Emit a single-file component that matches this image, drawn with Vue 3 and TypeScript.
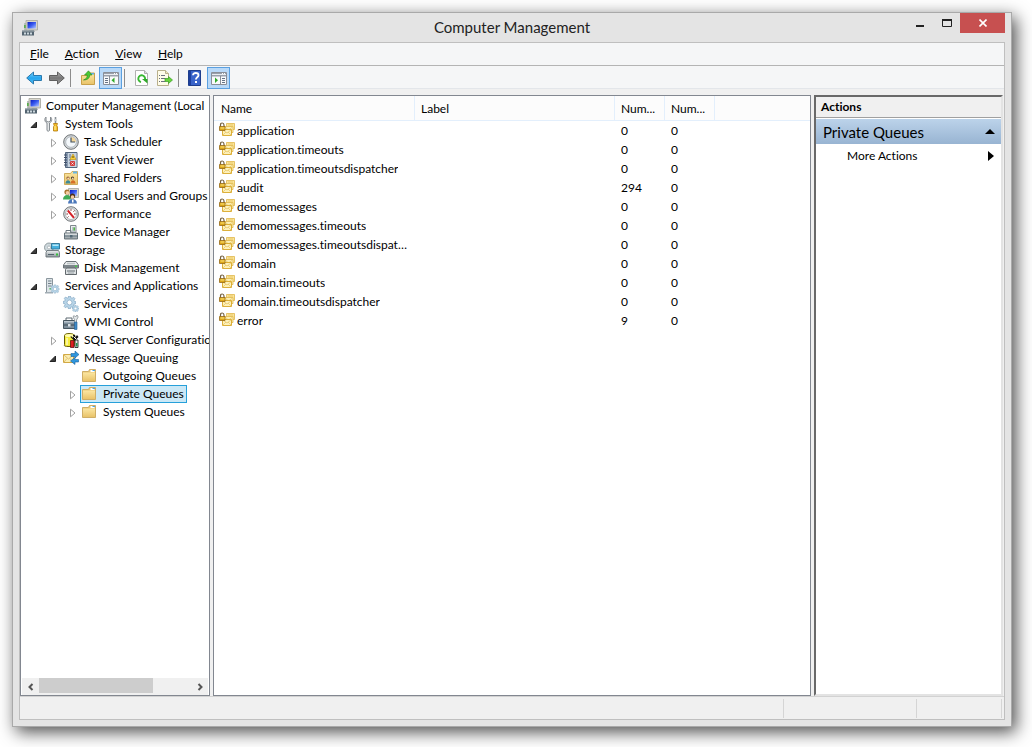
<script setup lang="ts">
import { ref } from 'vue'

interface Node { label: string; icon: string; level: number; state?: 'open' | 'closed' }
interface Queue { name: string; messages: number; journal: number }

const menus = ['File', 'Action', 'View', 'Help']

const tools = [
  [{ icon: 'back', label: 'Back' }, { icon: 'forward', label: 'Forward' }],
  [{ icon: 'up', label: 'Up one level' }, { icon: 'treepane', label: 'Show or hide console tree', on: true }],
  [{ icon: 'refresh', label: 'Refresh' }, { icon: 'export', label: 'Export list' }],
  [{ icon: 'help', label: 'Help' }, { icon: 'actionpane', label: 'Show or hide action pane', on: true }],
]

const nodes: Node[] = [
  { label: 'Computer Management (Local', icon: 'computer', level: 0 },
  { label: 'System Tools', icon: 'tools', level: 1, state: 'open' },
  { label: 'Task Scheduler', icon: 'clock', level: 2, state: 'closed' },
  { label: 'Event Viewer', icon: 'event', level: 2, state: 'closed' },
  { label: 'Shared Folders', icon: 'shared', level: 2, state: 'closed' },
  { label: 'Local Users and Groups', icon: 'users', level: 2, state: 'closed' },
  { label: 'Performance', icon: 'perf', level: 2, state: 'closed' },
  { label: 'Device Manager', icon: 'device', level: 2 },
  { label: 'Storage', icon: 'storage', level: 1, state: 'open' },
  { label: 'Disk Management', icon: 'disk', level: 2 },
  { label: 'Services and Applications', icon: 'server', level: 1, state: 'open' },
  { label: 'Services', icon: 'gears', level: 2 },
  { label: 'WMI Control', icon: 'wmi', level: 2 },
  { label: 'SQL Server Configuration', icon: 'sql', level: 2, state: 'closed' },
  { label: 'Message Queuing', icon: 'msmq', level: 2, state: 'open' },
  { label: 'Outgoing Queues', icon: 'folder', level: 3 },
  { label: 'Private Queues', icon: 'folder', level: 3, state: 'closed' },
  { label: 'System Queues', icon: 'folder', level: 3, state: 'closed' },
]

const queues: Queue[] = [
  { name: 'application', messages: 0, journal: 0 },
  { name: 'application.timeouts', messages: 0, journal: 0 },
  { name: 'application.timeoutsdispatcher', messages: 0, journal: 0 },
  { name: 'audit', messages: 294, journal: 0 },
  { name: 'demomessages', messages: 0, journal: 0 },
  { name: 'demomessages.timeouts', messages: 0, journal: 0 },
  { name: 'demomessages.timeoutsdispatcher', messages: 0, journal: 0 },
  { name: 'domain', messages: 0, journal: 0 },
  { name: 'domain.timeouts', messages: 0, journal: 0 },
  { name: 'domain.timeoutsdispatcher', messages: 0, journal: 0 },
  { name: 'error', messages: 9, journal: 0 },
]

const selected = ref('Private Queues')
</script>

<template>
  <svg class="defs" aria-hidden="true">
    <defs>
      <linearGradient id="gBlue" x1="0" y1="0" x2="1" y2="1">
        <stop offset="0" stop-color="#0a1cc0" /><stop offset=".5" stop-color="#3a5cf0" /><stop offset="1" stop-color="#b8ccff" />
      </linearGradient>
      <linearGradient id="gFolder" x1="0" y1="0" x2="0" y2="1">
        <stop offset="0" stop-color="#fbe6a2" /><stop offset="1" stop-color="#e9c369" />
      </linearGradient>
      <linearGradient id="gBack" x1="0" y1="0" x2="0" y2="1">
        <stop offset="0" stop-color="#7fd4fb" /><stop offset=".5" stop-color="#25a5ee" /><stop offset="1" stop-color="#4fc0f8" />
      </linearGradient>
      <linearGradient id="gFwd" x1="0" y1="0" x2="0" y2="1">
        <stop offset="0" stop-color="#b5b5b5" /><stop offset=".5" stop-color="#777" /><stop offset="1" stop-color="#a0a0a0" />
      </linearGradient>
      <linearGradient id="gMetal" x1="0" y1="0" x2="0" y2="1">
        <stop offset="0" stop-color="#eef1f2" /><stop offset="1" stop-color="#8d979c" />
      </linearGradient>
    </defs>
    <symbol id="computer" viewBox="0 0 16 16">
      <path d="M2 3h3v8H2z" fill="#b9c0bd" /><path d="M2 5h2v3H2z" fill="#59b04c" />
      <path d="M4 .5h11.500v9.500H4z" fill="#d8d6cc" stroke="#a5a49d" stroke-width=".8" />
      <path d="M5.500 2h8.500v6.500H5.500z" fill="url(#gBlue)" />
      <path d="M7 10h5l1 2H6z" fill="#9fa5a8" />
      <path d="M0 10.500h12v5H0z" fill="#536471" /><path d="M0 10.500h12v1H0z" fill="#a8b3b8" />
      <path d="M2 12.500h2v2H2zM5 12.500h2v2H5zM8 12.500h2v2H8z" fill="#cbd6dc" />
    </symbol>
    <symbol id="tools" viewBox="0 0 16 16">
      <path d="M2 1C.2 2.500.5 6 3 7v7.500q1 1.500 2.500 0V7c2.500-1 3-4.500 1-6v4L4.200 6 2 5z" fill="#e6e9ea" stroke="#858b90" />
      <path d="M11.500 1v7" stroke="#8b9297" stroke-width="1.600" /><path d="M10.500 3h2v2h-2z" fill="#c5cacd" />
      <path d="M9.500 7.500h4l-.7 2 .7 1.500v4h-4v-4l.7-1.500z" fill="#f7c229" stroke="#b3790b" stroke-width=".8" />
      <path d="M11 10v4" stroke="#fff0a2" />
    </symbol>
    <symbol id="clock" viewBox="0 0 16 16">
      <circle cx="8" cy="8" r="7.300" fill="#d3d6d8" stroke="#707578" />
      <circle cx="8" cy="8" r="5.300" fill="#f4f8fb" stroke="#a2abb1" stroke-width=".7" />
      <path d="M8 8V3a5 5 0 0 1 4.900 5z" fill="#f3d598" /><path d="M8 3.500V8h4" fill="none" stroke="#425363" stroke-width="1.200" />
    </symbol>
    <symbol id="event" viewBox="0 0 16 16">
      <path d="M2.500.5H14v15H2.500z" fill="#8a9cb2" stroke="#52657c" /><path d="M5 1h8.500v14H5z" fill="#c8d3df" />
      <path d="M1 3h3M1 5.500h3M1 8h3M1 10.500h3M1 13h3" stroke="#41506a" />
      <path d="M6 3h2M6 5h2M6 8h2M6 11h2" stroke="#60738d" />
      <path d="M10 2l3 5.500H7z" fill="#fbd13b" stroke="#bc9110" stroke-width=".6" /><path d="M10 4v2" stroke="#5a4200" />
      <rect x="7" y="9" width="5" height="5" rx="1" fill="#d33d3d" /><path d="M8.500 10.500l2 2m0-2l-2 2" stroke="#fff" stroke-width=".8" />
    </symbol>
    <symbol id="shared" viewBox="0 0 16 16">
      <path d="M1.500 3.500h6l1.500-2h5.500v13h-13z" fill="url(#gFolder)" stroke="#c79d42" stroke-width=".8" />
      <path d="M10 1.500h4v2h-4z" fill="#64b5e7" />
      <circle cx="5" cy="8" r="1.600" fill="#8a5931" /><circle cx="9.500" cy="8" r="1.600" fill="#3c3325" />
      <path d="M2.500 13.500c0-4.500 5-4.500 5 0z" fill="#3e8a98" /><path d="M7.500 13.500c0-4.500 5-4.500 5 0z" fill="#d66f27" />
      <circle cx="5.200" cy="8.500" r="1" fill="#f7d5ad" /><circle cx="9.700" cy="8.500" r="1" fill="#f7d5ad" />
    </symbol>
    <symbol id="users" viewBox="0 0 16 16">
      <path d="M5.500.5H15.500v9H5.500z" fill="#d8d6cc" stroke="#a5a49d" stroke-width=".8" /><path d="M7 2h7v6H7z" fill="url(#gBlue)" />
      <circle cx="4" cy="4" r="2.600" fill="#a8742f" /><circle cx="4.500" cy="4.800" r="1.800" fill="#f5cba3" />
      <path d="M0 11.500c0-6 8-6 8 0z" fill="#3faa55" />
      <circle cx="9.500" cy="8" r="2.600" fill="#4c3019" /><circle cx="9.500" cy="9" r="1.800" fill="#f5cba3" />
      <path d="M5 15.500c0-6 9-6 9 0z" fill="#4c78ba" /><path d="M9 11.500h1.500v3H9z" fill="#fff" />
    </symbol>
    <symbol id="perf" viewBox="0 0 16 16">
      <circle cx="8" cy="8" r="7.300" fill="#e0e2e3" stroke="#6f7477" />
      <circle cx="8" cy="8" r="5.500" fill="#fff" stroke="#979fa4" stroke-width=".7" />
      <path d="M4.800 4.500l6.200 7.300" stroke="#d4232a" stroke-width="2" /><path d="M8 3.200v1.600M11.500 4.500l-1 1.200M12.700 8H11M3.400 8H5M4.500 11.500l1-1" stroke="#7d3333" />
    </symbol>
    <symbol id="device" viewBox="0 0 16 16">
      <path d="M7.500 1.500h5.500v7H7.500z" fill="#eceeef" stroke="#7e878d" /><path d="M9 3h3v5H9z" fill="#b9c2c7" /><path d="M10.500 3.500h1.500v3h-1.500z" fill="#50b946" />
      <path d="M3 9V6.500h5V9" fill="none" stroke="#6d787f" />
      <path d="M1.500 9h13v6h-13z" fill="url(#gMetal)" stroke="#6a767d" /><path d="M1 12h14" stroke="#536773" /><path d="M7 11h2.500v2.500H7z" fill="#526977" />
    </symbol>
    <symbol id="storage" viewBox="0 0 16 16">
      <circle cx="5" cy="5.500" r="4.500" fill="#ced8dc" stroke="#7f8b90" stroke-width=".8" /><circle cx="5" cy="5.500" r="1.500" fill="#fff" stroke="#7f8b90" stroke-width=".5" />
      <path d="M7.500 1.500h8v5.500h-8z" fill="#45b1df" stroke="#367a9c" /><path d="M8.500 2.500h6v1.500h-6z" fill="#b8e7f6" />
      <path d="M3 8.500h11.500l1 2v4.500H2v-4.500z" fill="url(#gMetal)" stroke="#697378" stroke-width=".9" /><path d="M4 12.500h6" stroke="#53626b" /><path d="M12 11.500h2v2h-2z" fill="#35c23a" />
    </symbol>
    <symbol id="disk" viewBox="0 0 16 16">
      <path d="M3 1.500h10l2.500 3.500v3H.500V5z" fill="#e8ebec" stroke="#6c7377" /><path d="M1 5h14v3H1z" fill="#7d868b" /><path d="M4 3.500h8" stroke="#bcc3c6" stroke-width="1.500" />
      <path d="M2.500 9.500l1-1.500h9l1 1.500v5h-11z" fill="#dde1e3" stroke="#62696d" /><path d="M4 11h8" stroke="#8b9398" stroke-width="1.500" /><path d="M12 5.500h2V7h-2z" fill="#48c84a" /><path d="M5 13h6" stroke="#9aa2a6" />
    </symbol>
    <symbol id="gear" viewBox="0 0 10 10">
      <path d="M4.300 0h1.400l.3 1.300 1 .4L8.200 1l1 1-.8 1.200.4 1L10 4.400v1.400l-1.300.3-.4 1L9 8.200l-1 1-1.200-.8-1 .4L5.600 10H4.200L4 8.700l-1-.4L1.800 9l-1-1 .8-1.200-.4-1L0 5.600V4.200L1.300 4l.4-1L1 1.800l1-1 1.200.8 1-.4z" fill="#b8d5e8" stroke="#7ea3bf" stroke-width=".5" />
      <circle cx="5" cy="5" r="1.900" fill="#fff" stroke="#7ea3bf" stroke-width=".5" />
    </symbol>
    <symbol id="server" viewBox="0 0 16 16">
      <path d="M2.500.5h6v14h-6z" fill="#dce3e7" stroke="#8a969d" /><path d="M4 3h3.500M4 5.500h3.500M4 8h3.500" stroke="#73828c" /><path d="M5.500 10H7v1.500H5.500z" fill="#42bd4b" /><path d="M1 14h8v1.500H1z" fill="#a2adb4" />
      <use href="#gear" x="6.500" y="6.500" width="9" height="9" />
    </symbol>
    <symbol id="gears" viewBox="0 0 16 16">
      <use href="#gear" x="0" y="0" width="13" height="13" /><use href="#gear" x="9" y="9" width="7" height="7" />
    </symbol>
    <symbol id="wmi" viewBox="0 0 16 16">
      <path d="M3 6.500V4h6v2.500" fill="none" stroke="#5d6870" /><path d="M.500 6.500h12v8H.5z" fill="#7d8e9b" stroke="#46555f" /><path d="M1 7h11v1.500H1z" fill="#bdc7ce" /><path d="M1 11h11" stroke="#3e4b55" /><path d="M5 10h2.500v2.500H5z" fill="#dbe1e5" />
      <path d="M11 1.500l1.500 1.500L14 1l1.200 2-1.700 3v4h-2V5.500L10 3z" fill="#e3e7e9" stroke="#757e84" stroke-width=".7" /><path d="M11.500 8h2.500v7.500h-2.500z" fill="#3f89c6" stroke="#255e91" stroke-width=".6" />
    </symbol>
    <symbol id="sql" viewBox="0 0 16 16">
      <path d="M1.500 3.500Q1.500 1.500 6 1.500t6 2v9q0 2-6 2t-4.500-2z" fill="#f5ec3d" stroke="#645a04" stroke-width="1" /><ellipse cx="6.500" cy="3.500" rx="4.500" ry="1.500" fill="#fffcae" /><path d="M4 6v7" stroke="#fff" />
      <path d="M8 4l2 2V3h2v3l2-3 1.500 2-3 3-1 1-4-4z" fill="#111" /><path d="M10.500 4.500l3 3" stroke="#fff" />
      <path d="M7.500 8.500h3.500v7H7.500z" fill="#de1c22" stroke="#520508" stroke-width=".7" /><path d="M12 8h3v7.500h-3z" fill="#e8eaeb" stroke="#111" stroke-width=".8" /><path d="M13 11h1.500v3.500H13z" fill="#1a9550" />
    </symbol>
    <symbol id="msmq" viewBox="0 0 16 16">
      <path d="M.5 4.500h10v8H.5z" fill="#fbedb2" stroke="#d2a945" /><path d="M1 5l4.500 4L10 5M1 12l3-3.500M10 12l-3-3.500" fill="none" stroke="#d7b35b" stroke-width=".8" />
      <path d="M8 5.500V3.500h4v-2.500l4 3.500-4 3.500V6.500H8z" fill="#2e96dd" stroke="#1762a0" stroke-width=".6" />
      <path d="M15.500 9.500v2.500h-3.500v2.500L7.500 11 12 7.500v2z" fill="#2e96dd" stroke="#1762a0" stroke-width=".6" />
    </symbol>
    <symbol id="folder" viewBox="0 0 16 16">
      <path d="M.500 3.500h6l1-2h6v12H.5z" fill="#e9c673" stroke="#cfae66" /><path d="M8.500 2h4v2h-4z" fill="#fff" /><path d="M10.500 2h2.500v1h-2.500z" fill="#4ba6e6" />
      <path d="M1 4.500h12v8.500H1z" fill="url(#gFolder)" />
    </symbol>
    <symbol id="queue" viewBox="0 0 16 16">
      <path d="M7.500 1.500h8v6h-8z" fill="#fae59a" stroke="#dfb64b" stroke-width=".8" /><path d="M9 3h5" stroke="#ecc968" />
      <path d="M5.500 4.500h8.500v6H5.500z" fill="#fcefb4" stroke="#dfb64b" stroke-width=".8" /><path d="M6 5l3.500 3 4-3" fill="none" stroke="#e9c76a" stroke-width=".8" />
      <path d="M3.500 7.500h9v6h-9z" fill="#fdf1bb" stroke="#d8a728" stroke-width=".9" /><path d="M4 8l4 3 4-3M4 13l3-3M12 13l-3-3" fill="none" stroke="#e9c76a" stroke-width=".8" />
      <path d="M1.500 5V3Q1.500 1 3.200 1T5 3v2" fill="none" stroke="#756240" stroke-width="1.200" /><path d="M.5 4.500h5.500v4H.5z" fill="#dba518" stroke="#96691a" stroke-width=".8" /><path d="M1.500 6h4" stroke="#ffe67a" />
    </symbol>
    <symbol id="back" viewBox="0 0 16 16"><path d="M.700 8L7.500 2v3.500h8v5h-8V14z" fill="url(#gBack)" stroke="#2a78ad" /></symbol>
    <symbol id="forward" viewBox="0 0 16 16"><path d="M15.300 8L8.500 2v3.500h-8v5h8V14z" fill="url(#gFwd)" stroke="#5f5f5f" /></symbol>
    <symbol id="up" viewBox="0 0 16 16">
      <path d="M1.500 5.500h6l1-2.500h6v11.500h-13z" fill="url(#gFolder)" stroke="#c8a14b" /><path d="M11 3h3v1.500h-3z" fill="#5aafe7" />
      <path d="M3.500 10c3-1 3.800-3 3.700-5H4.500L8.500.8l3.500 4.200H9.700c0 3-2 5-6.200 5z" fill="#49c934" stroke="#268a1b" stroke-width=".6" />
    </symbol>
    <symbol id="panebox" viewBox="0 0 16 16">
      <path d="M.5 2.500h15v12H.5z" fill="#f9fafb" stroke="#8a8f98" /><path d="M1 3h14v3.500H1z" fill="#9aa1ac" /><path d="M1 4.500h14" stroke="#e9ecf0" /><path d="M11 3.500h1M13 3.500h1" stroke="#fff" />
    </symbol>
    <symbol id="treepane" viewBox="0 0 16 16">
      <use href="#panebox" width="16" height="16" /><path d="M6.500 6v8.500" stroke="#8a8f98" /><path d="M2 8.500h3M2 10.500h3M2 12.500h3" stroke="#667386" /><path d="M11.500 7.500v5.500L8.500 10.200z" fill="#2eaa2a" />
    </symbol>
    <symbol id="actionpane" viewBox="0 0 16 16">
      <use href="#panebox" width="16" height="16" /><path d="M9.500 6v8.500" stroke="#8a8f98" /><path d="M11 8.500h3M11 10.500h3M11 12.500h3" stroke="#667386" /><path d="M4 7.500v5.500l3-2.800z" fill="#2eaa2a" />
    </symbol>
    <symbol id="refresh" viewBox="0 0 16 16">
      <path d="M1.500.5h9l3 3v12h-12z" fill="#fff" stroke="#b0b0b0" /><path d="M10.500.5v3h3" fill="#ddd" stroke="#b0b0b0" />
      <path d="M7 12A3.400 3.400 0 1 1 11 9.500" fill="none" stroke="#38b832" stroke-width="1.900" /><path d="M8 9h5.500v4.500z" fill="#2fa829" />
    </symbol>
    <symbol id="export" viewBox="0 0 16 16">
      <path d="M.5.500h8l3 3v12H.5z" fill="#fffce9" stroke="#b9b08c" /><path d="M8.500.5v3h3" fill="#eee6c2" stroke="#b9b08c" />
      <path d="M2 5.500h1M2 8.500h1M2 11.500h1M4 5.500h4M4 8.500h4M4 11.500h4" stroke="#6b7180" /><path d="M8 8.500h3.500V6.500l4 3.500-4 3.500v-2.000H8z" fill="#66d43b" stroke="#3b9c22" stroke-width=".7" />
    </symbol>
    <symbol id="help" viewBox="0 0 16 16">
      <path d="M.5.5h12v15H.5z" fill="#3964ca" stroke="#1e3e8d" /><path d="M1 1h2v14H1z" fill="#1d3f9e" />
      <path d="M5 5.300C5 2.200 10.500 2.200 10.500 5.300c0 2-2.600 2-2.600 4.200" fill="none" stroke="#fff" stroke-width="1.800" /><path d="M7 11h2v2H7z" fill="#fff" />
    </symbol>
  </svg>

  <div class="desktop">
    <main class="window">
      <header class="titlebar">
        <svg class="icon app"><use href="#computer" /></svg>
        <h1>Computer Management</h1>
        <div class="controls">
          <button type="button" aria-label="Minimize"><svg width="10" height="10"><path d="M1 7h8v2H1z" fill="#222" /></svg></button>
          <button type="button" aria-label="Maximize"><svg width="10" height="10"><path d="M.5 1.500h9v7h-9z" fill="none" stroke="#222" /><path d="M0 1h10v2H0z" fill="#222" /></svg></button>
          <button type="button" class="close" aria-label="Close"><svg width="8" height="8"><path d="M.5.5l7 7m0-7l-7 7" stroke="#fff" stroke-width="1.600" /></svg></button>
        </div>
      </header>

      <div class="client">
        <nav class="menubar" aria-label="Menu">
          <button v-for="m in menus" :key="m" type="button"><u>{{ m[0] }}</u>{{ m.slice(1) }}</button>
        </nav>
        <div class="toolbar" role="toolbar">
          <div v-for="(group, i) in tools" :key="i" class="group">
            <button v-for="t in group" :key="t.icon" type="button" :class="{ on: 'on' in t }" :aria-label="t.label">
              <svg class="icon"><use :href="'#' + t.icon" /></svg>
            </button>
          </div>
        </div>

        <div class="panes">
          <section class="pane tree-pane">
            <ul class="tree">
              <li v-for="n in nodes" :key="n.label" :class="'level' + n.level">
                <span v-if="n.level" class="twisty">
                  <svg v-if="n.state === 'open'" width="8" height="8"><path d="M6.500 1v5.500H1z" fill="#3c3c3c" stroke="#222" /></svg>
                  <svg v-else-if="n.state === 'closed'" width="8" height="10"><path d="M2.500 1.200v7.600L7 5z" fill="#fff" stroke="#a0a0a0" /></svg>
                </span>
                <button type="button" class="node" :class="{ selected: n.label === selected }" @click="selected = n.label">
                  <svg class="icon"><use :href="'#' + n.icon" /></svg>{{ n.label }}
                </button>
              </li>
            </ul>
            <div class="scrollbar">
              <button type="button" aria-label="Scroll left"><svg width="8" height="8"><path d="M5.500 1l-3 3 3 3" fill="none" stroke="#555" stroke-width="2" /></svg></button>
              <div class="track"><div class="thumb"></div></div>
              <button type="button" aria-label="Scroll right"><svg width="8" height="8"><path d="M2.500 1l3 3-3 3" fill="none" stroke="#555" stroke-width="2" /></svg></button>
            </div>
          </section>

          <section class="pane list-pane">
            <table>
              <colgroup><col class="c-name"><col class="c-label"><col class="c-num"><col class="c-num"><col></colgroup>
              <thead>
                <tr><th>Name</th><th>Label</th><th>Num...</th><th>Num...</th><th></th></tr>
              </thead>
              <tbody>
                <tr v-for="q in queues" :key="q.name">
                  <td class="name"><div><svg class="icon"><use href="#queue" /></svg><span>{{ q.name }}</span></div></td>
                  <td></td><td>{{ q.messages }}</td><td>{{ q.journal }}</td><td></td>
                </tr>
              </tbody>
            </table>
          </section>

          <aside class="actions">
            <h2>Actions</h2>
            <button type="button" class="section">Private Queues<svg width="10" height="6"><path d="M5 0l5 5H0z" /></svg></button>
            <button type="button" class="more">More Actions<svg width="6" height="10"><path d="M0 0l6 5-6 5z" /></svg></button>
          </aside>
        </div>

        <footer class="status"><span></span><span></span><span></span></footer>
      </div>
    </main>
  </div>
</template>

<style>
body { margin: 0; background: #fff; }
</style>

<style scoped>
* { box-sizing: border-box; }
.defs { position: absolute; width: 0; height: 0; }
button { font: inherit; color: inherit; border: 0; background: none; padding: 0; margin: 0; text-align: left; }
svg { display: block; flex: none; }
.icon { width: 16px; height: 16px; }
.desktop { display: flex; min-height: 100vh; padding: 12px 20px 20px 12px; overflow: hidden; }
.window {
  flex: 1; min-width: 0; display: flex; flex-direction: column;
  padding: 0 6px 6px 6px; border: 1px solid #a9a9a9; background: #e4e4e4;
  box-shadow: 4px 5px 16px rgba(0, 0, 0, .7);
  color: #000; font: 12px/18px Lato, "Open Sans", sans-serif;
  font-variant-ligatures: none;
}
.titlebar { display: grid; grid-template-columns: 1fr auto 1fr; height: 29px; align-items: center; }
.app { margin-left: 3px; }
h1 { margin: 0; font-size: 15px; font-weight: 400; line-height: 29px; color: #222; }
.controls { display: flex; justify-self: end; align-self: start; }
.controls button { display: flex; width: 27px; height: 20px; align-items: center; justify-content: center; }
.controls .close { width: 45px; background: #c75050; }
.client { flex: 1; display: flex; flex-direction: column; border: 1px solid #bfbfbf; background: #f0f0f0; }
.menubar { display: flex; height: 23px; padding-left: 2px; align-items: center; background: #f5f6f7; border-bottom: 1px solid #b4b4b4; }
.menubar button { padding: 0 8px; }
.toolbar { display: flex; height: 23px; padding: 1px 0 0 2px; background: #f5f6f7; border-bottom: 1px solid #e3e6ea; }
.group { display: flex; }
.group + .group::before { content: ""; width: 1px; height: 18px; margin: 2px 5px 0 2px; background: #8c8c8c; }
.group button { display: flex; width: 23px; height: 22px; align-items: center; justify-content: center; border: 1px solid transparent; }
.group button.on { background: #b9d9f8; border-color: #5ba0e0; }
.panes { flex: 1; display: flex; padding: 6px 1px 0 0; border-bottom: 1px solid #d2d2d2; }
.pane { background: #fff; border: 1px solid #828790; }
.tree-pane { display: flex; flex-direction: column; flex: none; width: 190px; margin-right: 3px; }
.tree { flex: 1; margin: 0; padding: 1px 0 0; list-style: none; overflow: hidden; }
.tree li { display: flex; height: 18px; white-space: nowrap; }
.level0 { padding-left: 2px; }
.level1 { padding-left: 4px; }
.level2 { padding-left: 23px; }
.level3 { padding-left: 42px; }
.twisty { display: flex; flex: none; width: 17px; padding: 2px 0 0 5px; align-items: center; }
.node { display: flex; flex: none; align-items: center; gap: 5px; height: 18px; padding: 0 2px 0 1px; line-height: 16px; border: 1px solid transparent; }
.node.selected { background: #cbe8f6; border-color: #26a0da; }
.scrollbar { display: flex; height: 17px; margin: 0 1px; background: #f0f0f0; }
.scrollbar button { display: flex; width: 17px; align-items: center; justify-content: center; }
.track { flex: 1; }
.thumb { width: 75%; height: 15px; background: #cdcdcd; }
.list-pane { flex: 1; min-width: 0; margin-right: 3px; }
table { width: 100%; table-layout: fixed; border-collapse: separate; border-spacing: 0; }
.c-name { width: 201px; }
.c-label { width: 200px; }
.c-num { width: 50px; }
th { height: 25px; padding: 1px 6px 0; font-weight: 400; text-align: left; background: #fcfcfc; border-right: 1px solid #e3effc; border-bottom: 1px solid #e3effc; }
th:first-child { padding-left: 7px; }
th:last-child { border-right: 0; }
td { height: 19px; padding: 0 6px; }
td.name { padding: 0 4px 0 5px; }
.name div { display: flex; gap: 2px; }
.name span { overflow: hidden; text-overflow: ellipsis; white-space: nowrap; }
.actions { flex: none; width: 189px; background: #fff; border: 2px solid; border-color: #696969 #e3e3e3 #e3e3e3 #696969; }
h2 { margin: 0; height: 21px; padding-left: 5px; font-size: 12px; line-height: 20px; border-bottom: 1px solid #a0a0a0; background: #f0f0f0; }
.actions button { display: flex; width: 100%; align-items: center; justify-content: space-between; }
.section { height: 26px; padding: 0 6px 0 7px; font-size: 15px; border-top: 1px solid #fff; background: linear-gradient(#bcd3ea, #98b4d2); }
.more { height: 24px; padding: 0 7px 0 31px; }
.status { display: flex; height: 22px; padding: 2px 2px 1px 0; }
.status span { border-right: 1px solid #d5d5d5; }
.status span:nth-child(1) { flex: 1; }
.status span:nth-child(2) { width: 133px; }
.status span:nth-child(3) { width: 85px; }
</style>
